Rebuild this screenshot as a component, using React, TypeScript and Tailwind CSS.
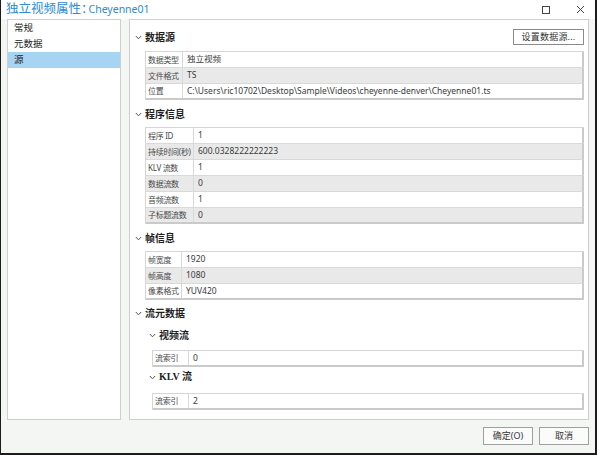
import React from "react";

const CJK = '"Noto Sans", "Noto Sans CJK SC", sans-serif';

function Chevron() {
  return (
    <svg width="7" height="5" viewBox="0 0 7 5" className="shrink-0">
      <polyline points="0.8,1 3.5,3.8 6.2,1" fill="none" stroke="#555" strokeWidth="1" />
    </svg>
  );
}

function Header({ title, sub, serif }: { title: string; sub?: boolean; serif?: boolean }) {
  return (
    <div className={`flex items-center h-[16px] gap-[3px] ${sub ? "pl-[19px]" : "pl-[5px]"}`}>
      <Chevron />
      <span
        className="text-[10px] font-bold text-[#1e1e1e] leading-none"
        style={serif ? { fontFamily: '"Liberation Serif", "Noto Sans CJK SC", serif' } : undefined}
      >
        {title}
      </span>
    </div>
  );
}

function Table({ rows, keyW, left }: { rows: [string, string][]; keyW: string; left: string }) {
  return (
    <div className={`${left} mr-[4px] border-t border-l border-[#d6d6d6]`}>
      {rows.map(([k, v], i) => {
        const last = i === rows.length - 1;
        const gray = i % 2 === 1;
        return (
          <div
            key={i}
            className={`flex h-[16px] border-r-2 border-r-[#cacaca] ${
              last ? "border-b-2 border-b-[#cacaca]" : "border-b border-b-[#d9d9d9]"
            } ${gray ? "bg-[#e9e9e9]" : "bg-white"}`}
          >
            <div className={`${keyW} shrink-0 border-r border-[#d9d9d9] pl-[2px] flex items-center text-[8px] tracking-[-0.3px] text-[#4a4a4a] whitespace-nowrap overflow-hidden`}>
              {k}
            </div>
            <div className="flex-1 pl-[4px] flex items-center text-[8.5px] text-[#3a3a3a] whitespace-nowrap overflow-hidden">
              {v}
            </div>
          </div>
        );
      })}
    </div>
  );
}

export default function App() {
  return (
    <div
      className="w-[597px] h-[455px] flex flex-col bg-[#f4f6f4] border-l border-r-2 border-b-2 border-[#1c1c1c] overflow-hidden"
      style={{ fontFamily: CJK }}
    >
      {/* Title bar */}
      <div className="h-[19px] shrink-0 bg-white flex items-center pl-[5px] relative">
        <span className="text-[12.5px] text-[#2a8ad4] leading-none">独立视频属性：</span>
        <span className="text-[10.5px] text-[#2a8ad4] leading-none -ml-[5px]">Cheyenne01</span>
        <div className="ml-auto flex items-center gap-[26px] pr-[10px]">
          <div className="w-[8px] h-[8px] border border-[#444]" />
          <svg width="9" height="9" viewBox="0 0 9 9">
            <path d="M1 1 L8 8 M8 1 L1 8" stroke="#444" strokeWidth="1" />
          </svg>
        </div>
      </div>

      {/* Body */}
      <div className="flex h-[401px] px-[6px] gap-[8px] shrink-0">
        <div className="w-[114px] bg-white border border-[#cfcfcf] flex flex-col">
          <div className="h-[16px] flex items-center pl-[6px] text-[9.5px] text-[#222]">常规</div>
          <div className="h-[16px] flex items-center pl-[6px] text-[9.5px] text-[#222]">元数据</div>
          <div className="h-[16px] flex items-center pl-[6px] text-[9.5px] text-[#222] bg-[#a7d4f3]">源</div>
        </div>

        <div className="flex-1 bg-white border border-[#cfcfcf] flex flex-col">
          <div className="mt-[9px] flex items-center justify-between pr-[4px]">
            <Header title="数据源" />
            <button className="h-[16px] w-[71px] border border-[#8a8a8a] bg-white text-[9px] text-[#333] flex items-center justify-center tracking-[0.2px]">
              设置数据源...
            </button>
          </div>
          <div className="mt-[6px]">
            <Table
              left="ml-[15px]"
              keyW="w-[37px]"
              rows={[
                ["数据类型", "独立视频"],
                ["文件格式", "TS"],
                ["位置", "C:\\Users\\ric10702\\Desktop\\Sample\\Videos\\cheyenne-denver\\Cheyenne01.ts"],
              ]}
            />
          </div>

          <div className="mt-[6px]">
            <Header title="程序信息" />
          </div>
          <div className="mt-[5px]">
            <Table
              left="ml-[15px]"
              keyW="w-[48px]"
              rows={[
                ["程序 ID", "1"],
                ["持续时间(秒)", "600.0328222222223"],
                ["KLV 流数", "1"],
                ["数据流数", "0"],
                ["音频流数", "1"],
                ["子标题流数", "0"],
              ]}
            />
          </div>

          <div className="mt-[6px]">
            <Header title="帧信息" />
          </div>
          <div className="mt-[5px]">
            <Table
              left="ml-[15px]"
              keyW="w-[36px]"
              rows={[
                ["帧宽度", "1920"],
                ["帧高度", "1080"],
                ["像素格式", "YUV420"],
              ]}
            />
          </div>

          <div className="mt-[5px]">
            <Header title="流元数据" />
          </div>
          <div className="mt-[6px]">
            <Header title="视频流" sub />
          </div>
          <div className="mt-[7px]">
            <Table left="ml-[22px]" keyW="w-[36px]" rows={[["流索引", "0"]]} />
          </div>
          <div className="mt-[2px]">
            <Header title="KLV 流" sub serif />
          </div>
          <div className="mt-[8px]">
            <Table left="ml-[22px]" keyW="w-[36px]" rows={[["流索引", "2"]]} />
          </div>
        </div>
      </div>

      {/* Footer */}
      <div className="flex justify-end gap-[6px] pt-[7px] pr-[6px]">
        <button className="h-[18px] w-[50px] border border-[#a0a0a0] bg-[#fbfbfb] text-[9px] text-[#333] flex items-center justify-center">
          确定(O)
        </button>
        <button className="h-[18px] w-[50px] border border-[#a0a0a0] bg-[#fbfbfb] text-[9px] text-[#333] flex items-center justify-center">
          取消
        </button>
      </div>
    </div>
  );
}
